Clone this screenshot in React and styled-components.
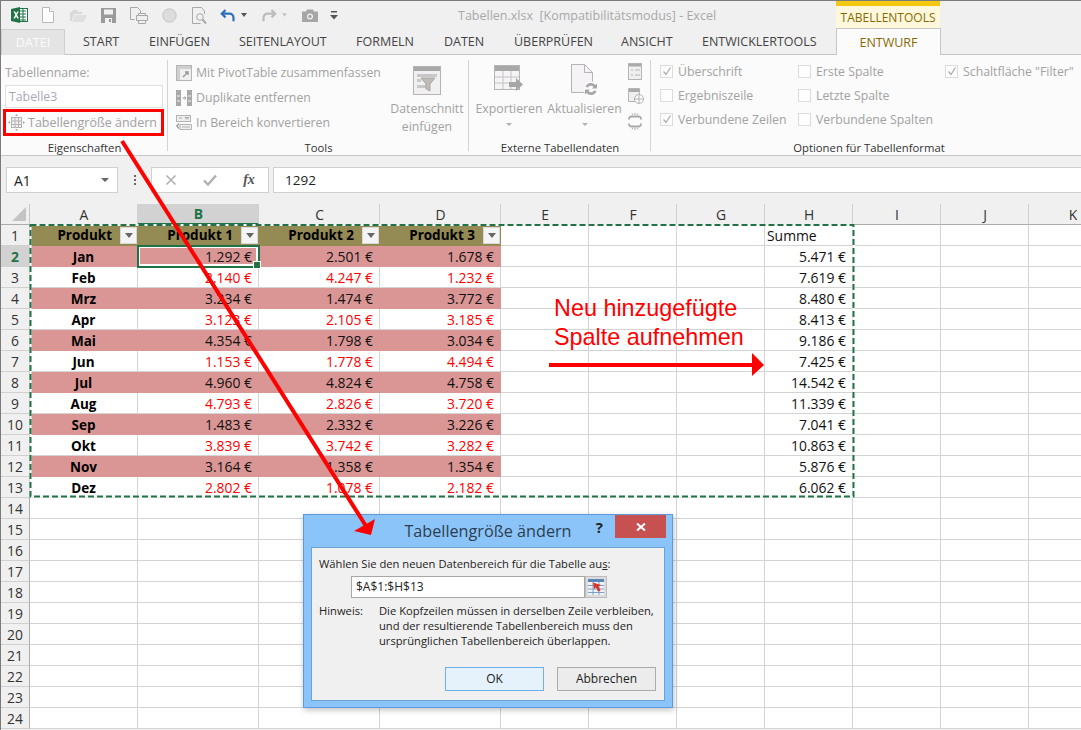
import React from 'react'
import styled, { createGlobalStyle } from 'styled-components'

const GlobalStyle = createGlobalStyle`
  html, body {
    margin: 0;
    padding: 0;
    background: #fff;
    overflow: hidden;
  }
  * {
    box-sizing: border-box;
  }
`

const uiFont = `"Open Sans", "Noto Sans", sans-serif`

const Window = styled.div`
  position: relative;
  width: 1081px;
  height: 730px;
  overflow: hidden;
  background: #f0f0f0;
  border-top: 1px solid #7b7b7b;
  border-left: 1px solid #7b7b7b;
  font-family: ${uiFont};
`

/* title bar */
const TitleBar = styled.div`
  display: flex;
  align-items: center;
  height: 27px;
`

const Qat = styled.div`
  display: flex;
  align-items: center;
  padding: 1px 0 0 10px;
`

const QatSlot = styled.span`
  display: flex;
  justify-content: center;
  align-items: center;
  width: ${(p) => p.$w}px;
`

const Title = styled.div`
  margin-left: 114px;
  padding-top: 2px;
  font-size: 12.5px;
  color: #a8a8a8;
  white-space: pre;
`

const ContextTitle = styled.div`
  display: flex;
  align-items: center;
  justify-content: center;
  margin-left: auto;
  margin-right: 141px;
  width: 104px;
  height: 27px;
  background: #fff8dc;
  border-top: 5px solid #f2c811;
  color: #8a6a00;
  font-size: 12px;
`

/* tabs */
const TabRow = styled.div`
  display: flex;
  height: 27px;
  border-bottom: 1px solid #c6c6c6;
`

const Tab = styled.div`
  width: ${(p) => p.$w}px;
  padding-left: 18px;
  font-size: 12.5px;
  line-height: 28px;
  color: #444;
  white-space: nowrap;
`

const FileTab = styled.div`
  width: 64px;
  height: 26px;
  margin-top: 1px;
  border: 1px solid #cfcfcf;
  border-bottom: 0;
  background: #e4e4e4;
  color: #fbfbfb;
  text-align: center;
  font-size: 12.5px;
  line-height: 26px;
`

const ActiveTab = styled.div`
  width: 105px;
  height: 27px;
  background: #fbfbfb;
  border: 1px solid #c6c6c6;
  border-bottom: 0;
  color: #8a6a00;
  text-align: center;
  font-size: 12.5px;
  line-height: 27px;
`

/* ribbon */
const Ribbon = styled.div`
  display: flex;
  height: 101px;
  background: #fbfbfb;
  border-bottom: 1px solid #c6c6c6;
`

const Group = styled.div`
  display: flex;
  flex-direction: column;
  width: ${(p) => p.$w}px;
  padding-top: 5px;
  position: relative;
  &:not(:last-child)::after {
    content: '';
    position: absolute;
    right: 0;
    top: 5px;
    bottom: 4px;
    width: 1px;
    background: #d4d4d4;
  }
`

const GroupBody = styled.div`
  display: flex;
  height: 80px;
  padding-left: ${(p) => p.$pad || 0}px;
`

const GroupLabel = styled.div`
  height: 15px;
  padding-left: ${(p) => p.$pad || 0}px;
  text-align: center;
  font-size: 11.3px;
  line-height: 15px;
  color: #333;
`

const NameColumn = styled.div`
  display: flex;
  flex-direction: column;
  padding-left: 4px;
  width: 163px;
`

const FieldLabel = styled.div`
  height: 25px;
  font-size: 12.3px;
  line-height: 26px;
  color: #a2a2a2;
`

const NameInput = styled.div`
  width: 158px;
  height: 23px;
  padding-left: 3px;
  background: #fff;
  border: 1px solid #e0e0e0;
  font-size: 12.3px;
  line-height: 21px;
  color: #a8a8b8;
`

const CommandRow = styled.div`
  display: flex;
  align-items: center;
  gap: 4px;
  height: 25px;
  font-size: 12.3px;
  color: #a2a2a2;
  white-space: nowrap;
`

const ResizeRow = styled(CommandRow)`
  gap: 3px;
  margin-top: 2px;
  padding-left: 3px;
  font-size: 12.5px;
`

const ToolColumn = styled.div`
  display: flex;
  flex-direction: column;
  width: 214px;
`

const LargeButton = styled.div`
  display: flex;
  flex-direction: column;
  align-items: center;
  width: ${(p) => p.$w}px;
  font-size: 12.3px;
  line-height: 18px;
  color: #a2a2a2;
  text-align: center;
  white-space: nowrap;
`

const LargeIcon = styled.div`
  height: 40px;
  display: flex;
  align-items: center;
`

const Caret = styled.span`
  display: block;
  width: 0;
  height: 0;
  margin-top: 5px;
  border-left: 3px solid transparent;
  border-right: 3px solid transparent;
  border-top: 3px solid #b0b0b0;
`

const SmallIconColumn = styled.div`
  display: flex;
  flex-direction: column;
  gap: 8px;
  margin-left: 2px;
  padding-top: 3px;
`

const OptionColumn = styled.div`
  display: flex;
  flex-direction: column;
  width: ${(p) => p.$w}px;
  margin-top: -1px;
`

const OptionRow = styled.div`
  display: flex;
  align-items: center;
  gap: 5px;
  height: 24px;
  font-size: 12.3px;
  color: #a2a2a2;
  white-space: nowrap;
`

const CheckBox = styled.span`
  display: flex;
  align-items: center;
  justify-content: center;
  width: 13px;
  height: 13px;
  background: #fdfdfd;
  border: 1px solid #dcdcdc;
`

/* formula bar */
const FormulaRow = styled.div`
  display: flex;
  align-items: stretch;
  height: 26px;
  margin: 11px 0;
  padding-left: 5px;
`

const NameBox = styled.div`
  display: flex;
  align-items: center;
  justify-content: space-between;
  width: 112px;
  padding: 0 8px 0 7px;
  background: #fff;
  border: 1px solid #d0d0d0;
  font-size: 13.9px;
  color: #222;
`

const NameCaret = styled.span`
  width: 0;
  height: 0;
  border-left: 4px solid transparent;
  border-right: 4px solid transparent;
  border-top: 4px solid #666;
`

const Dots = styled.div`
  display: flex;
  flex-direction: column;
  justify-content: center;
  align-items: center;
  gap: 2px;
  width: 33px;
  span {
    width: 2px;
    height: 2px;
    background: #666;
  }
`

const FormulaButtons = styled.div`
  display: grid;
  grid-template-columns: 38px 40px 38px;
  justify-items: center;
  align-items: center;
  width: 118px;
  background: #fff;
  border: 1px solid #d0d0d0;
`

const Fx = styled.span`
  font-family: "Liberation Serif", serif;
  font-style: italic;
  font-weight: bold;
  font-size: 14px;
  color: #555;
`

const FormulaInput = styled.div`
  flex: 1;
  margin-left: 4px;
  padding-left: 11px;
  background: #fff;
  border: 1px solid #d0d0d0;
  border-right: 0;
  font-size: 13.5px;
  line-height: 24px;
  color: #222;
`

/* sheet */
const Sheet = styled.div`
  display: grid;
  grid-template-columns: 29px 108px repeat(3, 121px) repeat(7, 88px) 52px;
  grid-auto-rows: 21px;
  background: #fff;
  font-size: 13.9px;
  color: #111;
`

const Corner = styled.div`
  background: #f0f0f0;
  border-right: 1px solid #c8c8c8;
  border-bottom: 1px solid #ababab;
  display: flex;
  align-items: flex-end;
  justify-content: flex-end;
  padding: 0 3px 3px 0;
`

const ColHead = styled.div`
  display: flex;
  align-items: center;
  justify-content: center;
  padding-left: 1px;
  background: ${(p) => (p.$selected ? '#d2d2d2' : '#f0f0f0')};
  color: ${(p) => (p.$selected ? '#217346' : '#333')};
  font-weight: ${(p) => (p.$selected ? 700 : 400)};
  border-right: 1px solid #d0d0d0;
  border-bottom: ${(p) => (p.$selected ? '2px solid #217346' : '1px solid #ababab')};
`

const RowHead = styled.div`
  display: flex;
  align-items: center;
  justify-content: center;
  padding-top: 1px;
  background: ${(p) => (p.$selected ? '#d2d2d2' : '#f0f0f0')};
  color: ${(p) => (p.$selected ? '#217346' : '#333')};
  font-weight: ${(p) => (p.$selected ? 700 : 400)};
  border-right: 1px solid #ababab;
  border-bottom: 1px solid #d0d0d0;
`

const Cell = styled.div`
  display: flex;
  align-items: center;
  padding-top: 1px;
  border-right: 1px solid #d4d4d4;
  border-bottom: 1px solid #d4d4d4;
  white-space: nowrap;
`

const HeaderCell = styled(Cell)`
  justify-content: flex-end;
  gap: 8px;
  padding-top: 0;
  background: #948a54;
  border-color: #948a54;
  font-size: 13.5px;
  font-weight: 700;
  color: #000;
`

const FilterButton = styled.span`
  display: flex;
  align-items: center;
  justify-content: center;
  width: 17px;
  height: 17px;
  background: #f4f4f4;
  border: 1px solid #d8d8d8;
  &::after {
    content: '';
    border-left: 4px solid transparent;
    border-right: 4px solid transparent;
    border-top: 5px solid #666;
  }
`

const MonthCell = styled(Cell)`
  justify-content: center;
  font-size: 13.5px;
  font-weight: 700;
  color: #000;
  background: ${(p) => (p.$band ? '#da9694' : '#fff')};
  border-color: ${(p) => (p.$band ? '#da9694' : '#d4d4d4')};
`

const ValueCell = styled(Cell)`
  justify-content: flex-end;
  padding-right: 6px;
  color: ${(p) => (p.$band ? '#111' : '#ff0000')};
  background: ${(p) => (p.$band ? '#da9694' : '#fff')};
  border-color: ${(p) => (p.$band ? '#da9694' : '#d4d4d4')};
`

const ActiveCell = styled(ValueCell)`
  position: relative;
  z-index: 1;
  outline: 2px solid #217346;
  outline-offset: -1px;
  box-shadow: inset 0 0 0 2px #fff;
  &::after {
    content: '';
    position: absolute;
    right: -3px;
    bottom: -3px;
    width: 6px;
    height: 6px;
    background: #217346;
    border: 1px solid #fff;
  }
`

const SumCell = styled(Cell)`
  justify-content: flex-end;
  padding-right: 6px;
`

const TextCell = styled(Cell)`
  padding-left: 2px;
`

/* dialog */
const Dialog = styled.div`
  position: absolute;
  left: 302px;
  top: 513px;
  width: 370px;
  height: 194px;
  display: flex;
  flex-direction: column;
  background: #8bc4f9;
  border: 1px solid #5a9bd8;
  box-shadow: 1px 2px 6px rgba(0, 0, 0, 0.25);
`

const DialogHead = styled.div`
  position: relative;
  display: flex;
  align-items: center;
  justify-content: center;
  height: 32px;
  font-size: 16.2px;
  color: #2c3e50;
`

const HelpMark = styled.span`
  position: absolute;
  right: 69px;
  top: 2px;
  font-size: 15px;
  font-weight: 700;
  color: #222;
`

const CloseButton = styled.span`
  position: absolute;
  right: 6px;
  top: 0;
  display: flex;
  align-items: center;
  justify-content: center;
  width: 51px;
  height: 23px;
  background: #c75050;
`

const DialogBody = styled.div`
  flex: 1;
  margin: 0 7px 6px;
  padding: 8px 8px 0 7px;
  background: #f0f0f0;
  border: 1px solid #6ba3d6;
  font-size: 11.2px;
  line-height: 16px;
  color: #222;
`

const RangeRow = styled.div`
  display: flex;
  margin: 4px 0 5px 32px;
  height: 22px;
`

const RangeInput = styled.div`
  width: 234px;
  padding-left: 4px;
  background: #fff;
  border: 1px solid #a8a8a8;
  font-size: 12px;
  line-height: 20px;
`

const RangeButton = styled.span`
  display: flex;
  align-items: center;
  justify-content: center;
  width: 22px;
  background: #dcdcdc;
  border: 1px solid #bcbcbc;
`

const NoteRow = styled.div`
  display: flex;
  line-height: 15px;
`

const NoteLabel = styled.div`
  width: 60px;
`

const NoteText = styled.div`
  white-space: pre;
`

const DialogButtons = styled.div`
  display: flex;
  justify-content: flex-end;
  gap: 13px;
  margin-top: 19px;
`

const DialogButton = styled.div`
  width: 99px;
  height: 24px;
  text-align: center;
  font-size: 12px;
  line-height: 22px;
  background: ${(p) => (p.$primary ? '#e5f1fb' : '#ececec')};
  border: 1px solid ${(p) => (p.$primary ? '#6fb0ea' : '#acacac')};
`

/* overlays */
const Marks = styled.svg`
  position: absolute;
  left: -1px;
  top: -1px;
  pointer-events: none;
  z-index: 2;
`

const Highlight = styled.div`
  position: absolute;
  left: 2px;
  top: 108px;
  width: 161px;
  height: 27px;
  border: 3px solid #f00;
`

const Note = styled.div`
  position: absolute;
  left: 553px;
  top: 293px;
  font-family: "Liberation Sans", sans-serif;
  font-size: 23.4px;
  line-height: 28.5px;
  color: #f00;
  white-space: pre;
`

const gray = '#b4b4b4'

const Logo = () => (
  <svg width="17" height="16" viewBox="0 0 17 16">
    <rect x="7" y="1.5" width="9.5" height="13" fill="#fff" stroke="#217346" />
    <path d="M9 4h6M9 7h6M9 10h6M9 13h6M12 2v12" stroke="#217346" />
    <path d="M0 2l9-2v16l-9-2z" fill="#217346" />
    <path d="M2.5 4.5h1.7l1 2 1-2h1.6l-1.8 3.3 1.9 3.6H6.2l-1.1-2.2-1 2.2H2.4l1.9-3.6z" fill="#fff" />
  </svg>
)

const NewDoc = () => (
  <svg width="12" height="16" viewBox="0 0 12 16" fill="#fff" stroke="#b8b8b8">
    <path d="M.5.5h7l4 4v11H.5z" />
    <path d="M7.5.5v4h4" />
  </svg>
)

const Folder = () => (
  <svg width="17" height="13" viewBox="0 0 17 13">
    <path d="M0 3h2l1-2h4l1 2h4v2H4L1.5 12H0z" fill="#d8d8d8" />
    <path d="M4.5 6H17l-3 7H2z" fill="#e0e0e0" />
  </svg>
)

const SaveIcon = () => (
  <svg width="15" height="15" viewBox="0 0 15 15">
    <path d="M0 0h15v15H0z" fill="#9a9a9a" />
    <path d="M3 1.500h9v5H3z" fill="#f0f0f0" />
    <path d="M4 10h7v5H4z" fill="#f0f0f0" />
    <path d="M8 11h2v3H8z" fill="#9a9a9a" />
  </svg>
)

const PrintPreview = () => (
  <svg width="18" height="17" viewBox="0 0 18 17" fill="none" stroke="#a8a8a8">
    <path d="M.5.500h7l3 3v3M.5.500v12h4" />
    <path d="M6.500 8.500h11v5h-11z" fill="#eee" />
    <path d="M8.500 8.500v-2h7v2M8.500 13.500v3h7v-3" />
  </svg>
)

const Circle = () => (
  <svg width="15" height="15" viewBox="0 0 15 15">
    <circle cx="7.500" cy="7.500" r="6.700" fill="#dcdcdc" stroke="#c4c4c4" />
  </svg>
)

const DocSearch = () => (
  <svg width="15" height="17" viewBox="0 0 15 17" fill="none" stroke="#a8a8a8">
    <path d="M12.500 7V4l-3-3.500H.5v16h8" />
    <circle cx="8" cy="10" r="3.300" />
    <path d="M10.500 12.500l3.500 4" strokeWidth="2" />
  </svg>
)

const Undo = () => (
  <svg width="16" height="13" viewBox="0 0 16 13" fill="none" stroke="#2b6fb5" strokeWidth="2.200">
    <path d="M5.500 1L1.800 4.700l3.700 3.700" />
    <path d="M2 4.700h7.500a4 4 0 0 1 4 4v3.500" />
  </svg>
)

const Redo = () => (
  <svg width="16" height="13" viewBox="0 0 16 13" fill="none" stroke="#bcbcbc" strokeWidth="2.200">
    <path d="M10.500 1l3.700 3.700-3.700 3.700" />
    <path d="M14 4.700H6.500a4 4 0 0 0-4 4v3.500" />
  </svg>
)

const SmallCaret = ({ color }) => (
  <svg width="6" height="4" viewBox="0 0 6 4">
    <path d="M0 0h6L3 4z" fill={color} />
  </svg>
)

const CameraIcon = () => (
  <svg width="16" height="13" viewBox="0 0 16 13">
    <path d="M0 2.500h4L5 .5h6l1 2h4V13H0z" fill="#a6a6a6" />
    <circle cx="8" cy="7.500" r="3" fill="#f0f0f0" />
    <circle cx="8" cy="7.500" r="1.700" fill="#a6a6a6" />
  </svg>
)

const MoreIcon = () => (
  <svg width="8" height="9" viewBox="0 0 8 9">
    <path d="M1 0h6v1.500H1z" fill="#555" />
    <path d="M0 4h8L4 8.500z" fill="#555" />
  </svg>
)

const PivotIcon = () => (
  <svg width="16" height="16" viewBox="0 0 16 16" fill="none" stroke={gray}>
    <rect x=".5" y=".5" width="15" height="15" fill="#efefef" />
    <path d="M1 1h14v3H1zM1 1h3v14H1z" fill="#cfcfcf" stroke="none" />
    <path d="M7 12l5-5M9 7h3v3" stroke="#999" strokeWidth="1.400" />
  </svg>
)

const DuplicateIcon = () => (
  <svg width="16" height="16" viewBox="0 0 16 16">
    <path d="M0 0h5v16H0zM11 0h5v16h-5z" fill="#a8a8a8" />
    <path d="M1 5.500h3v1H1zM1 10.500h3v1H1zM12 5.500h3v1h-3zM12 10.500h3v1h-3z" fill="#f4f4f4" />
    <path d="M6.500 8H10M8.500 6.500L10 8 8.500 9.500" stroke="#999" fill="none" />
  </svg>
)

const ConvertIcon = () => (
  <svg width="16" height="16" viewBox="0 0 16 16" fill="none" stroke={gray}>
    <rect x=".5" y=".5" width="14" height="6" fill="#eee" />
    <path d="M3 3h3M9 2.500h4l-2 2z" stroke="#aaa" />
    <path d="M4 9.500h11.500v5H4z" fill="#eee" />
    <path d="M6 12h8" />
    <path d="M3 8.500L.8 11 3 13.500" stroke="#999" strokeWidth="1.300" />
  </svg>
)

const SliceIcon = () => (
  <svg width="28" height="29" viewBox="0 0 28 29">
    <rect x=".5" y=".5" width="27" height="28" fill="#f2eff2" stroke="#b4b4b4" />
    <path d="M1 1h26v4H1z" fill="#a8a8a8" />
    <path d="M4 8h20v3H4zM4 19h9v3H4zM4 13h4v3H4z" fill="#c8c8c8" />
    <path d="M8 12h14l-5 6v7l-4-2v-5z" fill="#c0bcb4" stroke="#a8a8a8" />
  </svg>
)

const ExportIcon = () => (
  <svg width="30" height="30" viewBox="0 0 30 30">
    <rect x=".5" y=".5" width="25" height="24" fill="#f5f3f5" stroke="#b4b4b4" />
    <path d="M1 1h24v5H1z" fill="#a8a8a8" />
    <path d="M1 12h24M1 18h24M9 6v18M17 6v18" stroke="#c4c4c4" fill="none" />
    <path d="M15 17v5h7v4l7-6.500-7-6.500v4h-3z" fill="#a6a6a6" />
  </svg>
)

const RefreshIcon = () => (
  <svg width="28" height="33" viewBox="0 0 28 33">
    <path d="M.5.500h13l8 8v20H.5z" fill="#f5f3f5" stroke="#b4b4b4" />
    <path d="M13.500.500v8h8" fill="none" stroke="#b4b4b4" />
    <circle cx="20" cy="25" r="7.500" fill="#fbfbfb" />
    <path d="M14.500 23a5.800 5.800 0 0 1 10-2l1.500-1.500v5h-5l1.500-1.500a3.300 3.300 0 0 0-5.500.5zM25.500 27a5.800 5.800 0 0 1-10 2L14 30.500v-5h5l-1.500 1.500a3.300 3.300 0 0 0 5.500-.5z" fill="#a8a8a8" />
  </svg>
)

const PropsIcon = () => (
  <svg width="14" height="17" viewBox="0 0 14 17" fill="#efefef" stroke={gray}>
    <rect x=".5" y=".5" width="13" height="16" />
    <path d="M1 1h12v2.500H1z" fill="#aaa" stroke="none" />
    <path d="M3 7h2M7 7h5M3 12h2M7 12h5" />
  </svg>
)

const BrowserIcon = () => (
  <svg width="16" height="17" viewBox="0 0 16 17" fill="none" stroke={gray}>
    <path d="M.5.500h11v13H.5z" fill="#efefef" />
    <path d="M1 1h10v3H1z" fill="#aaa" stroke="none" />
    <circle cx="11" cy="11" r="4.500" fill="#fbfbfb" />
    <path d="M6.500 11h9M11 6.500v9" />
  </svg>
)

const UnlinkIcon = () => (
  <svg width="14" height="17" viewBox="0 0 14 17" fill="none" stroke="#a8a8a8" strokeWidth="1.800">
    <path d="M1 6.500V6A2.500 2.500 0 0 1 3.500 3.500h7A2.500 2.500 0 0 1 13 6v.5" />
    <path d="M1 10.500v.5A2.500 2.500 0 0 0 3.500 13.500h7A2.500 2.500 0 0 0 13 11v-.5" />
    <path d="M4 .5l1 1.500M10 .5L9 2M7 0v2M4 16.500L5 15M10 16.500L9 15M7 15v2" strokeWidth="1" />
  </svg>
)

const Cross = () => (
  <svg width="12" height="12" viewBox="0 0 12 12">
    <path d="M1.500 1.500l9 9M10.500 1.500l-9 9" stroke="#b0b0b0" strokeWidth="1.600" />
  </svg>
)

const Tick = () => (
  <svg width="14" height="12" viewBox="0 0 14 12">
    <path d="M1 6.500l4 4 8-9" fill="none" stroke="#b0b0b0" strokeWidth="2.400" />
  </svg>
)

const Check = () => (
  <svg width="10" height="10" viewBox="0 0 10 10">
    <path d="M1.500 5.500L4 8.500 8.500 1.500" fill="none" stroke="#ababab" strokeWidth="1.200" />
  </svg>
)

const Triangle = () => (
  <svg width="14" height="14" viewBox="0 0 14 14">
    <path d="M14 0v14H0z" fill="#c4c4c4" />
  </svg>
)

const ResizeIcon = () => (
  <svg width="17" height="17" viewBox="0 0 17 17" fill="none" stroke={gray}>
    <rect x="3.500" y="3.500" width="10" height="10" fill="#f0f0f0" />
    <path d="M3.500 7h10M3.500 10.500h10M7 3.500v10M10.500 3.500v10" />
    <path d="M8.500 0L7 2h3zM8.500 17L7 15h3zM0 8.500L2 7v3zM17 8.500L15 7v3z" fill="#aaa" stroke="none" />
  </svg>
)

const RangeIcon = () => (
  <svg width="16" height="16" viewBox="0 0 16 16">
    <rect width="16" height="16" fill="#eef3f8" />
    <path d="M0 0h16v3H0z" fill="#5a86b5" />
    <path d="M0 6.500h16M0 10h16M0 13.500h16M5 3v13M11 3v13" stroke="#7f9fc4" />
    <path d="M5 3.500l8 2.500-2.500 1.500 2 4-2.500 1-2-4L6 10z" fill="#d9362b" />
  </svg>
)

const CloseIcon = () => (
  <svg width="10" height="8" viewBox="0 0 10 8">
    <path d="M1 .5l8 7M9 .5l-8 7" stroke="#fff" strokeWidth="2" />
  </svg>
)

const tabs = [
  ['START', 66],
  ['EINFÜGEN', 90],
  ['SEITENLAYOUT', 117],
  ['FORMELN', 88],
  ['DATEN', 70],
  ['ÜBERPRÜFEN', 107],
  ['ANSICHT', 81],
  ['ENTWICKLERTOOLS', 152],
]

const rows = [
  ['Jan', '1.292 €', '2.501 €', '1.678 €', '5.471 €'],
  ['Feb', '2.140 €', '4.247 €', '1.232 €', '7.619 €'],
  ['Mrz', '3.234 €', '1.474 €', '3.772 €', '8.480 €'],
  ['Apr', '3.123 €', '2.105 €', '3.185 €', '8.413 €'],
  ['Mai', '4.354 €', '1.798 €', '3.034 €', '9.186 €'],
  ['Jun', '1.153 €', '1.778 €', '4.494 €', '7.425 €'],
  ['Jul', '4.960 €', '4.824 €', '4.758 €', '14.542 €'],
  ['Aug', '4.793 €', '2.826 €', '3.720 €', '11.339 €'],
  ['Sep', '1.483 €', '2.332 €', '3.226 €', '7.041 €'],
  ['Okt', '3.839 €', '3.742 €', '3.282 €', '10.863 €'],
  ['Nov', '3.164 €', '1.358 €', '1.354 €', '5.876 €'],
  ['Dez', '2.802 €', '1.078 €', '2.182 €', '6.062 €'],
]

const columns = ['A', 'B', 'C', 'D', 'E', 'F', 'G', 'H', 'I', 'J', 'K']

const Blank = ({ count }) => Array.from({ length: count }, (_, i) => <Cell key={i} />)

const DataRow = ({ index, data }) => {
  const band = index % 2 === 0
  const [month, a, b, c, sum] = data
  return (
    <>
      <RowHead $selected={index === 0}>{index + 2}</RowHead>
      <MonthCell $band={band}>{month}</MonthCell>
      {index === 0 ? <ActiveCell $band>{a}</ActiveCell> : <ValueCell $band={band}>{a}</ValueCell>}
      <ValueCell $band={band}>{b}</ValueCell>
      <ValueCell $band={band}>{c}</ValueCell>
      <Blank count={3} />
      <SumCell>{sum}</SumCell>
      <Blank count={4} />
    </>
  )
}

const EmptyRow = ({ number }) => (
  <>
    <RowHead>{number}</RowHead>
    <Blank count={12} />
  </>
)

const App = () => (
  <Window>
    <GlobalStyle />
    <TitleBar>
      <Qat>
        <QatSlot $w={17}><Logo /></QatSlot>
        <QatSlot $w={5} />
        <QatSlot $w={30}><NewDoc /></QatSlot>
        <QatSlot $w={30}><Folder /></QatSlot>
        <QatSlot $w={31}><SaveIcon /></QatSlot>
        <QatSlot $w={30}><PrintPreview /></QatSlot>
        <QatSlot $w={30}><Circle /></QatSlot>
        <QatSlot $w={31}><DocSearch /></QatSlot>
        <QatSlot $w={25}><Undo /></QatSlot>
        <QatSlot $w={8}><SmallCaret color="#555" /></QatSlot>
        <QatSlot $w={8} />
        <QatSlot $w={26}><Redo /></QatSlot>
        <QatSlot $w={5}><SmallCaret color="#c4c4c4" /></QatSlot>
        <QatSlot $w={8} />
        <QatSlot $w={29}><CameraIcon /></QatSlot>
        <QatSlot $w={20}><MoreIcon /></QatSlot>
      </Qat>
      <Title>Tabellen.xlsx  [Kompatibilitätsmodus] - Excel</Title>
      <ContextTitle>TABELLENTOOLS</ContextTitle>
    </TitleBar>

    <TabRow>
      <FileTab>DATEI</FileTab>
      {tabs.map(([name, w]) => (
        <Tab key={name} $w={w}>{name}</Tab>
      ))}
      <ActiveTab>ENTWURF</ActiveTab>
    </TabRow>

    <Ribbon>
      <Group $w={167}>
        <GroupBody>
          <NameColumn>
            <FieldLabel>Tabellenname:</FieldLabel>
            <NameInput>Tabelle3</NameInput>
            <ResizeRow><ResizeIcon />Tabellengröße ändern</ResizeRow>
          </NameColumn>
        </GroupBody>
        <GroupLabel>Eigenschaften</GroupLabel>
      </Group>

      <Group $w={301}>
        <GroupBody $pad={8}>
          <ToolColumn>
            <CommandRow><PivotIcon />Mit PivotTable zusammenfassen</CommandRow>
            <CommandRow><DuplicateIcon />Duplikate entfernen</CommandRow>
            <CommandRow><ConvertIcon />In Bereich konvertieren</CommandRow>
          </ToolColumn>
          <LargeButton $w={74}>
            <LargeIcon><SliceIcon /></LargeIcon>
            Datenschnitt<br />einfügen
          </LargeButton>
        </GroupBody>
        <GroupLabel>Tools</GroupLabel>
      </Group>

      <Group $w={182}>
        <GroupBody $pad={6}>
          <LargeButton $w={68}>
            <LargeIcon><ExportIcon /></LargeIcon>
            Exportieren
            <Caret />
          </LargeButton>
          <LargeButton $w={83}>
            <LargeIcon><RefreshIcon /></LargeIcon>
            Aktualisieren
            <Caret />
          </LargeButton>
          <SmallIconColumn>
            <PropsIcon />
            <BrowserIcon />
            <UnlinkIcon />
          </SmallIconColumn>
        </GroupBody>
        <GroupLabel>Externe Tabellendaten</GroupLabel>
      </Group>

      <Group $w={430}>
        <GroupBody $pad={9}>
          <OptionColumn $w={138}>
            <OptionRow><CheckBox><Check /></CheckBox>Überschrift</OptionRow>
            <OptionRow><CheckBox />Ergebniszeile</OptionRow>
            <OptionRow><CheckBox><Check /></CheckBox>Verbundene Zeilen</OptionRow>
          </OptionColumn>
          <OptionColumn $w={147}>
            <OptionRow><CheckBox />Erste Spalte</OptionRow>
            <OptionRow><CheckBox />Letzte Spalte</OptionRow>
            <OptionRow><CheckBox />Verbundene Spalten</OptionRow>
          </OptionColumn>
          <OptionColumn $w={135}>
            <OptionRow><CheckBox><Check /></CheckBox>Schaltfläche "Filter"</OptionRow>
          </OptionColumn>
        </GroupBody>
        <GroupLabel $pad={6}>Optionen für Tabellenformat</GroupLabel>
      </Group>
    </Ribbon>

    <FormulaRow>
      <NameBox>A1<NameCaret /></NameBox>
      <Dots><span /><span /><span /></Dots>
      <FormulaButtons><Cross /><Tick /><Fx>fx</Fx></FormulaButtons>
      <FormulaInput>1292</FormulaInput>
    </FormulaRow>

    <Sheet>
      <Corner><Triangle /></Corner>
      {columns.map((c) => (
        <ColHead key={c} $selected={c === 'B'}>{c}</ColHead>
      ))}
      <ColHead />

      <RowHead>1</RowHead>
      <HeaderCell>Produkt<FilterButton /></HeaderCell>
      <HeaderCell>Produkt 1<FilterButton /></HeaderCell>
      <HeaderCell>Produkt 2<FilterButton /></HeaderCell>
      <HeaderCell>Produkt 3<FilterButton /></HeaderCell>
      <Blank count={3} />
      <TextCell>Summe</TextCell>
      <Blank count={4} />

      {rows.map((r, i) => (
        <DataRow key={r[0]} index={i} data={r} />
      ))}
      {Array.from({ length: 11 }, (_, i) => (
        <EmptyRow key={i} number={i + 14} />
      ))}
    </Sheet>

    <Marks width="1081" height="730" viewBox="0 0 1081 730">
      <rect x="30.500" y="225" width="823" height="271.500" fill="none" stroke="#fff" strokeWidth="2" />
      <rect x="30.500" y="225" width="823" height="271.500" fill="none" stroke="#217346" strokeWidth="2" strokeDasharray="6 3" />
    </Marks>

    <Dialog>
      <DialogHead>
        Tabellengröße ändern
        <HelpMark>?</HelpMark>
        <CloseButton><CloseIcon /></CloseButton>
      </DialogHead>
      <DialogBody>
        Wählen Sie den neuen Datenbereich für die Tabelle au<u>s</u>:
        <RangeRow>
          <RangeInput>$A$1:$H$13</RangeInput>
          <RangeButton><RangeIcon /></RangeButton>
        </RangeRow>
        <NoteRow>
          <NoteLabel>Hinweis:</NoteLabel>
          <NoteText>{'Die Kopfzeilen müssen in derselben Zeile verbleiben,\nund der resultierende Tabellenbereich muss den\nursprünglichen Tabellenbereich überlappen.'}</NoteText>
        </NoteRow>
        <DialogButtons>
          <DialogButton $primary>OK</DialogButton>
          <DialogButton>Abbrechen</DialogButton>
        </DialogButtons>
      </DialogBody>
    </Dialog>

    <Highlight />
    <Note>{'Neu hinzugefügte\nSpalte aufnehmen'}</Note>

    <Marks width="1081" height="730" viewBox="0 0 1081 730">
      <path d="M122 141L366 526" stroke="#f00" strokeWidth="4" />
      <path d="M375 519L354 531L371 535z" fill="#f00" />
      <path d="M549 365H753" stroke="#f00" strokeWidth="4" />
      <path d="M752 353L764 365L752 376z" fill="#f00" />
    </Marks>
  </Window>
)

export default App
